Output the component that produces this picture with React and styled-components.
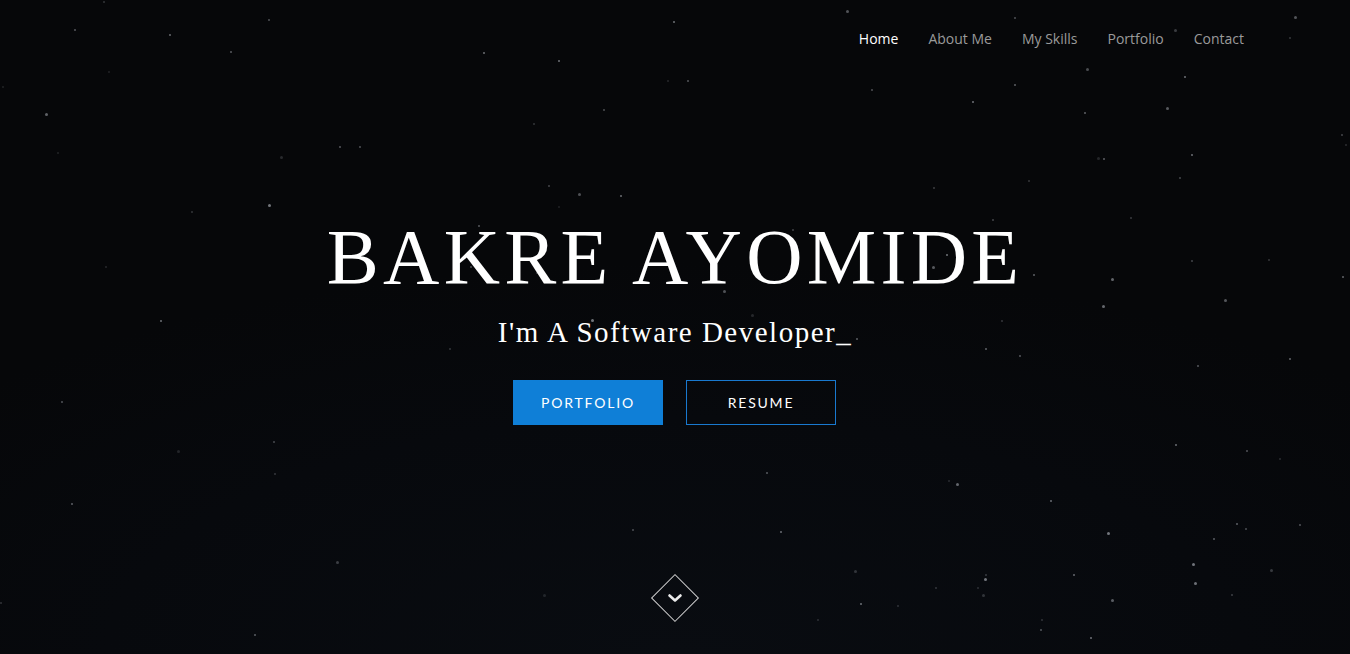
import styled, { createGlobalStyle } from "styled-components";

const GlobalStyle = createGlobalStyle`
  html, body {
    margin: 0;
    padding: 0;
    background: #07090d;
  }
  * {
    box-sizing: border-box;
  }
`;

// simple seeded random so the stars stay in the same place
function makeStars(count) {
  let seed = 7;
  const rand = () => {
    seed = (seed * 16807) % 2147483647;
    return (seed - 1) / 2147483646;
  };
  const stars = [];
  for (let i = 0; i < count; i++) {
    stars.push({
      x: rand() * 100,
      y: rand() * 100,
      size: rand() > 0.75 ? 3 : 2,
      alpha: 0.12 + rand() * 0.4,
    });
  }
  return stars;
}

const stars = makeStars(120);

const links = ["Home", "About Me", "My Skills", "Portfolio", "Contact"];

export default function App() {
  return (
    <>
      <GlobalStyle />
      <Hero>
        <StarField>
          {stars.map((s, i) => (
            <Star
              key={i}
              style={{
                left: `${s.x}%`,
                top: `${s.y}%`,
                width: s.size,
                height: s.size,
                opacity: s.alpha,
              }}
            />
          ))}
        </StarField>
        <Nav>
          {links.map((link, i) => (
            <NavLink key={link} $active={i === 0}>
              {link}
            </NavLink>
          ))}
        </Nav>
        <Intro>
          <Name>BAKRE AYOMIDE</Name>
          <Tagline>I'm A Software Developer_</Tagline>
          <Actions>
            <Button $filled>PORTFOLIO</Button>
            <Button>RESUME</Button>
          </Actions>
        </Intro>
        <ScrollDown>
          <Diamond>
            <svg width="16" height="10" viewBox="0 0 16 10" fill="none">
              <path
                d="M2.5 2.5L8 7.5l5.5-5"
                stroke="#ececec"
                strokeWidth="2.6"
                strokeLinecap="round"
                strokeLinejoin="round"
              />
            </svg>
          </Diamond>
        </ScrollDown>
      </Hero>
    </>
  );
}

const Hero = styled.section`
  position: relative;
  height: 100vh;
  min-height: 654px;
  display: flex;
  flex-direction: column;
  overflow: hidden;
  background: radial-gradient(
      ellipse 70% 60% at 50% 100%,
      #090c11 0%,
      #07090d 60%,
      #060709 100%
    );
`;

const StarField = styled.div`
  position: absolute;
  inset: 0;
  pointer-events: none;
`;

const Star = styled.span`
  position: absolute;
  border-radius: 50%;
  background: #d8dde6;
  filter: blur(0.6px);
`;

const Nav = styled.nav`
  position: relative;
  display: flex;
  justify-content: flex-end;
  gap: 30px;
  padding: 29px 106px 0 0;
`;

const NavLink = styled.a`
  font-family: "Open Sans", sans-serif;
  font-size: 14px;
  line-height: 20px;
  color: ${(p) => (p.$active ? "#ffffff" : "#9a9a9a")};
  text-decoration: none;
  cursor: pointer;
`;

const Intro = styled.div`
  position: relative;
  flex: 1;
  display: flex;
  flex-direction: column;
  align-items: center;
  padding-top: 168px;
`;

const Name = styled.h1`
  margin: 0;
  font-family: "Liberation Serif", "Times New Roman", serif;
  font-weight: 400;
  font-size: 78px;
  line-height: 80px;
  letter-spacing: 4.3px;
  color: #ffffff;
`;

const Tagline = styled.h2`
  margin: 18px 0 0;
  font-family: "Liberation Serif", "Times New Roman", serif;
  font-weight: 400;
  font-size: 29px;
  line-height: 34px;
  letter-spacing: 1.5px;
  color: #ffffff;
`;

const Actions = styled.div`
  display: flex;
  gap: 23px;
  margin: 31px 1px 0 0;
`;

const Button = styled.a`
  width: 150px;
  height: 45px;
  display: flex;
  align-items: center;
  justify-content: center;
  font-family: Lato, "Open Sans", sans-serif;
  font-size: 14px;
  letter-spacing: 1.8px;
  color: #ffffff;
  background: ${(p) => (p.$filled ? "#0f7fd7" : "transparent")};
  border: 1px solid ${(p) => (p.$filled ? "#0f7fd7" : "#1979cf")};
  cursor: pointer;
`;

const ScrollDown = styled.div`
  position: relative;
  display: flex;
  justify-content: center;
  padding-bottom: 39px;
`;

const Diamond = styled.div`
  width: 34px;
  height: 34px;
  border: 1px solid #d0d0d0;
  transform: rotate(45deg);
  display: flex;
  align-items: center;
  justify-content: center;

  svg {
    transform: rotate(-45deg);
  }
`;
